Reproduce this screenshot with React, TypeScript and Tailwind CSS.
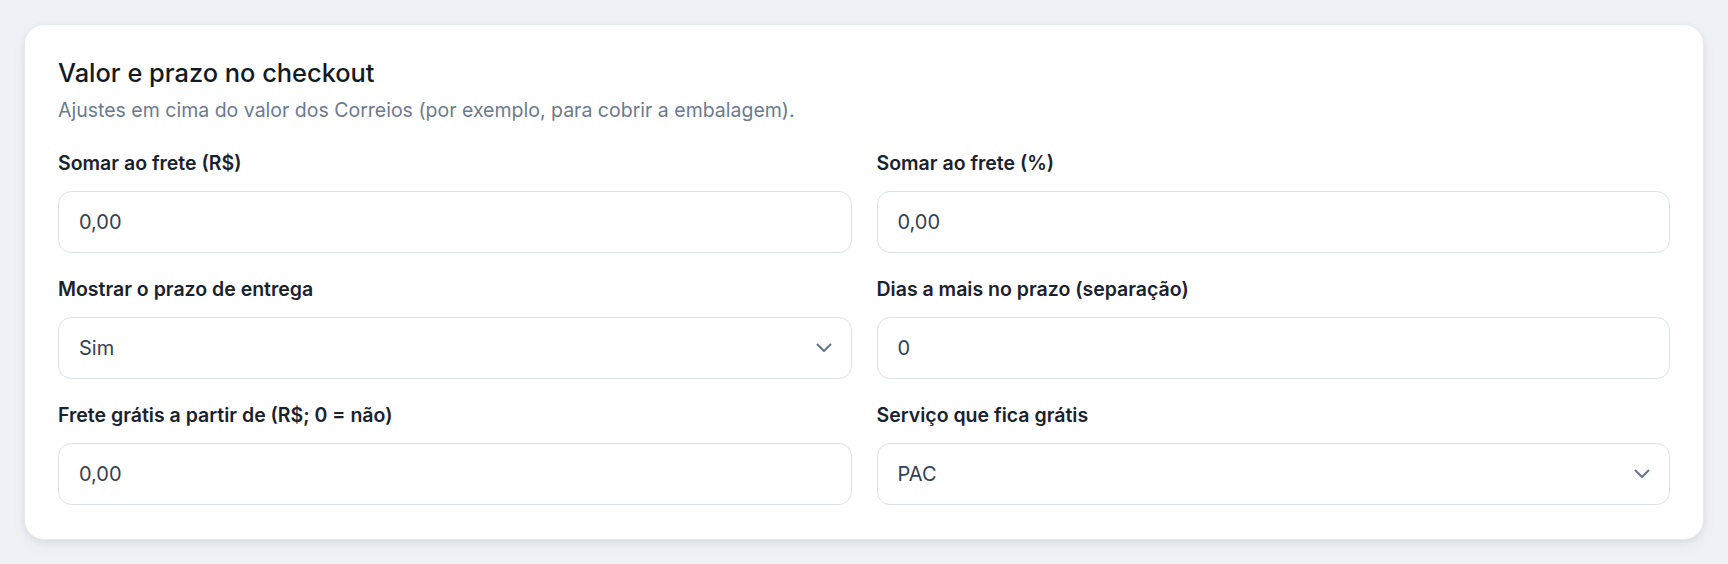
import React from "react";

function Chevron() {
  return (
    <svg width="16" height="10" viewBox="0 0 16 10" fill="none" stroke="#64748b" strokeWidth="2" strokeLinecap="round" strokeLinejoin="round">
      <path d="M1.5 1.5L8 8l6.5-6.5" />
    </svg>
  );
}

function Field({ label, value, select }: { label: string; value: string; select?: boolean }) {
  return (
    <div className="flex flex-col">
      <label className="text-[19.5px] leading-6 font-semibold text-[#1a222e]">{label}</label>
      <div className="mt-[16px] h-[62px] rounded-[13px] border border-[#dde2e8] bg-white pl-5 pr-[19px] flex items-center justify-between">
        <span className="text-[20px] text-[#334155]">{value}</span>
        {select && <Chevron />}
      </div>
    </div>
  );
}

export default function App() {
  return (
    <div className="min-h-screen bg-[#eef2f6] px-6 pt-6 pb-6" style={{ fontFamily: "Inter, 'Noto Sans', sans-serif" }}>
      <div className="rounded-[20px] bg-white border border-[#e6eaef] shadow-[0_2px_6px_rgba(15,23,42,0.06),0_6px_16px_rgba(15,23,42,0.04)] px-[33px] pt-[33px] pb-[34px]">
        <h2 className="text-[25.4px] leading-[30px] font-medium text-[#121a24]">Valor e prazo no checkout</h2>
        <p className="mt-[10px] text-[19.5px] leading-6 text-[#6b7a8f]">
          Ajustes em cima do valor dos Correios (por exemplo, para cobrir a embalagem).
        </p>
        <div className="mt-[29px] grid grid-cols-2 gap-x-[25px] gap-y-[24px]">
          <Field label="Somar ao frete (R$)" value="0,00" />
          <Field label="Somar ao frete (%)" value="0,00" />
          <Field label="Mostrar o prazo de entrega" value="Sim" select />
          <Field label="Dias a mais no prazo (separação)" value="0" />
          <Field label="Frete grátis a partir de (R$; 0 = não)" value="0,00" />
          <Field label="Serviço que fica grátis" value="PAC" select />
        </div>
      </div>
    </div>
  );
}
